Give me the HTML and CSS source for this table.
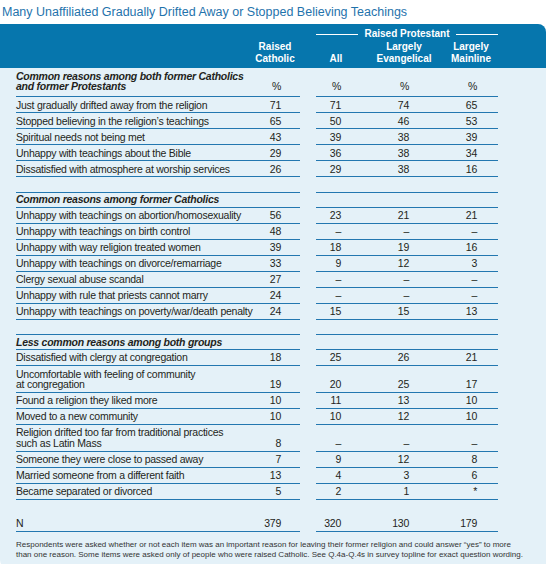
FILE: index.html
```html
<!DOCTYPE html>
<html lang="en">
<head>
    <meta charset="UTF-8">
    <meta name="viewport" content="width=device-width, initial-scale=1.0">
    <title>Many Unaffiliated Gradually Drifted Away</title>
    <link rel="stylesheet" href="styles.css">
</head>
<body>
    <div class="chart">
        <h1 class="title">Many Unaffiliated Gradually Drifted Away or Stopped Believing Teachings</h1>

        <div class="panel">
            <div class="head">
                <div class="prot">Raised Protestant</div>
                <div class="h-cath">Raised<br>Catholic</div>
                <div class="h-all">All</div>
                <div class="h-ev">Largely<br>Evangelical</div>
                <div class="h-ml">Largely<br>Mainline</div>
            </div>

            <div class="rows">
                <!-- both groups -->
                <div class="row first">
                    <span class="label group">Common reasons among both former Catholics<br>and former Protestants</span>
                    <span class="val cath">%</span><span class="gap"></span>
                    <span class="val all">%</span><span class="val ev">%</span><span class="val ml">%</span>
                </div>
                <div class="row"><span class="label">Just gradually drifted away from the religion</span><span class="val cath">71</span><span class="gap"></span><span class="val all">71</span><span class="val ev">74</span><span class="val ml">65</span></div>
                <div class="row"><span class="label">Stopped believing in the religion’s teachings</span><span class="val cath">65</span><span class="gap"></span><span class="val all">50</span><span class="val ev">46</span><span class="val ml">53</span></div>
                <div class="row"><span class="label">Spiritual needs not being met</span><span class="val cath">43</span><span class="gap"></span><span class="val all">39</span><span class="val ev">38</span><span class="val ml">39</span></div>
                <div class="row"><span class="label">Unhappy with teachings about the Bible</span><span class="val cath">29</span><span class="gap"></span><span class="val all">36</span><span class="val ev">38</span><span class="val ml">34</span></div>
                <div class="row"><span class="label">Dissatisfied with atmosphere at worship services</span><span class="val cath">26</span><span class="gap"></span><span class="val all">29</span><span class="val ev">38</span><span class="val ml">16</span></div>

                <div class="spacer"></div>

                <!-- former Catholics -->
                <div class="row section">
                    <span class="label group">Common reasons among former Catholics</span>
                    <span class="val cath"></span><span class="gap"></span>
                    <span class="val all"></span><span class="val ev"></span><span class="val ml"></span>
                </div>
                <div class="row"><span class="label">Unhappy with teachings on abortion/homosexuality</span><span class="val cath">56</span><span class="gap"></span><span class="val all">23</span><span class="val ev">21</span><span class="val ml">21</span></div>
                <div class="row"><span class="label">Unhappy with teachings on birth control</span><span class="val cath">48</span><span class="gap"></span><span class="val all">–</span><span class="val ev">–</span><span class="val ml">–</span></div>
                <div class="row"><span class="label">Unhappy with way religion treated women</span><span class="val cath">39</span><span class="gap"></span><span class="val all">18</span><span class="val ev">19</span><span class="val ml">16</span></div>
                <div class="row"><span class="label">Unhappy with teachings on divorce/remarriage</span><span class="val cath">33</span><span class="gap"></span><span class="val all">9</span><span class="val ev">12</span><span class="val ml">3</span></div>
                <div class="row"><span class="label">Clergy sexual abuse scandal</span><span class="val cath">27</span><span class="gap"></span><span class="val all">–</span><span class="val ev">–</span><span class="val ml">–</span></div>
                <div class="row"><span class="label">Unhappy with rule that priests cannot marry</span><span class="val cath">24</span><span class="gap"></span><span class="val all">–</span><span class="val ev">–</span><span class="val ml">–</span></div>
                <div class="row"><span class="label">Unhappy with teachings on poverty/war/death penalty</span><span class="val cath">24</span><span class="gap"></span><span class="val all">15</span><span class="val ev">15</span><span class="val ml">13</span></div>

                <div class="spacer"></div>

                <!-- less common -->
                <div class="row section">
                    <span class="label group">Less common reasons among both groups</span>
                    <span class="val cath"></span><span class="gap"></span>
                    <span class="val all"></span><span class="val ev"></span><span class="val ml"></span>
                </div>
                <div class="row"><span class="label">Dissatisfied with clergy at congregation</span><span class="val cath">18</span><span class="gap"></span><span class="val all">25</span><span class="val ev">26</span><span class="val ml">21</span></div>
                <div class="row two"><span class="label">Uncomfortable with feeling of community<br>at congregation</span><span class="val cath">19</span><span class="gap"></span><span class="val all">20</span><span class="val ev">25</span><span class="val ml">17</span></div>
                <div class="row"><span class="label">Found a religion they liked more</span><span class="val cath">10</span><span class="gap"></span><span class="val all">11</span><span class="val ev">13</span><span class="val ml">10</span></div>
                <div class="row"><span class="label">Moved to a new community</span><span class="val cath">10</span><span class="gap"></span><span class="val all">10</span><span class="val ev">12</span><span class="val ml">10</span></div>
                <div class="row two"><span class="label">Religion drifted too far from traditional practices<br>such as Latin Mass</span><span class="val cath">8</span><span class="gap"></span><span class="val all">–</span><span class="val ev">–</span><span class="val ml">–</span></div>
                <div class="row"><span class="label">Someone they were close to passed away</span><span class="val cath">7</span><span class="gap"></span><span class="val all">9</span><span class="val ev">12</span><span class="val ml">8</span></div>
                <div class="row"><span class="label">Married someone from a different faith</span><span class="val cath">13</span><span class="gap"></span><span class="val all">4</span><span class="val ev">3</span><span class="val ml">6</span></div>
                <div class="row"><span class="label">Became separated or divorced</span><span class="val cath">5</span><span class="gap"></span><span class="val all">2</span><span class="val ev">1</span><span class="val ml">*</span></div>

                <div class="spacer last"></div>

                <div class="row"><span class="label">N</span><span class="val cath">379</span><span class="gap"></span><span class="val all">320</span><span class="val ev">130</span><span class="val ml">179</span></div>

                <p class="note">Respondents were asked whether or not each item was an important reason for leaving their former religion and could answer “yes” to more<br>than one reason. Some items were asked only of people who were raised Catholic. See Q.4a-Q.4s in survey topline for exact question wording.</p>
            </div>
        </div>
    </div>
</body>
</html>
```

FILE: styles.css
```css
body {
    margin: 0;
    padding: 0;
    background-color: #fff;
    font-family: "Liberation Sans", Arial, sans-serif;
}

.chart {
    width: 548px;
}

.title {
    margin: 0;
    padding-left: 2px;
    font-size: 12.5px;
    font-weight: normal;
    line-height: 24px;
    color: #1f73ac;
}

.panel {
    width: 546px;
    background: #e4f1f8;
    border-radius: 0 8px 0 8px;
    padding-bottom: 8px;
    overflow: hidden;
}

/* header band */
.head {
    display: grid;
    grid-template-columns: 234px 50px 16px 40px 92px 50px;
    grid-template-rows: 12px auto;
    row-gap: 1px;
    padding: 4px 0 3px 16px;
    background: #0676ad;
    color: #fff;
    font-size: 10px;
    font-weight: bold;
    line-height: 12px;
    text-align: center;
}

.prot {
    grid-column: 4 / 7;
    grid-row: 1;
    display: flex;
    align-items: center;
    gap: 6px;
}

.prot::before, .prot::after {
    content: "";
    flex: 1;
    height: 1px;
    background: #fff;
}

.h-cath, .h-all, .h-ev, .h-ml {
    grid-row: 2;
    align-self: end;
}

.h-cath { grid-column: 2; }
.h-all { grid-column: 4; }
.h-ev { grid-column: 5; padding-left: 4px; }
.h-ml { grid-column: 6; padding-right: 4px; }

/* table rows */
.rows {
    padding-left: 16px;
}

.row {
    display: grid;
    grid-template-columns: 234px 50px 16px 40px 92px 50px;
    font-size: 10.5px;
    letter-spacing: -0.25px;
    line-height: 10.7px;
    color: #231f20;
}

.row > span {
    display: flex;
    align-items: flex-end;
    padding-top: 2.4px;
    padding-bottom: 1.9px;
    border-bottom: 1px solid #2277b0;
    white-space: nowrap;
}

.row > .gap {
    border-bottom: none;
}

.label {
    display: block;
}

.row > .label {
    display: block;
}

.val {
    justify-content: flex-end;
}

.row > .cath { padding-right: 19px; }
.row > .all { padding-right: 15px; }
.row > .ev { padding-right: 39px; }
.row > .ml { padding-right: 21px; }

.row.first > span {
    padding-top: 2.5px;
    padding-bottom: 4.3px;
}

.row.two > span {
    padding-top: 2.5px;
    padding-bottom: 2px;
}

.row.section > span {
    padding-top: 1.8px;
    padding-bottom: 1.5px;
    border-top: 1px solid #2277b0;
}

.row.section > .gap {
    border-top: none;
}

.group {
    font-weight: bold;
    font-style: italic;
}

.spacer {
    height: 14.5px;
}

.spacer.last {
    height: 16px;
}

.note {
    margin: 0;
    padding-top: 8px;
    font-size: 8px;
    line-height: 10px;
    color: #333;
    white-space: nowrap;
}
```
